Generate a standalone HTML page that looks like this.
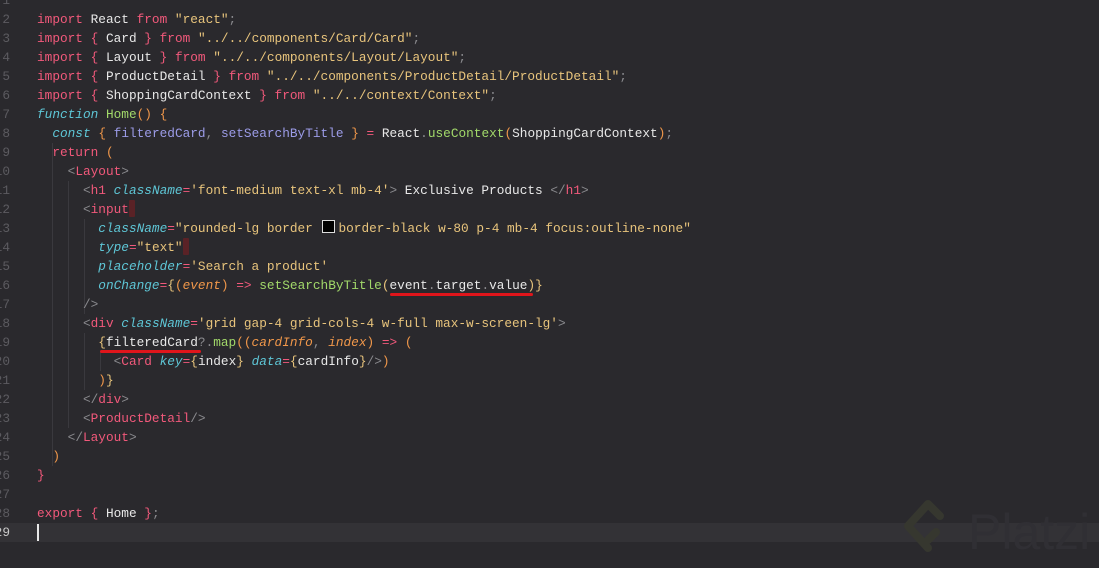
<!DOCTYPE html>
<html><head><meta charset="utf-8"><style>
html,body{margin:0;padding:0;}
body{width:1099px;height:568px;background:#2a292d;overflow:hidden;position:relative;font-family:"Liberation Mono",monospace;font-size:12.77px;}
.l{position:absolute;left:0;height:19px;line-height:19px;white-space:pre;color:#e8e8e8;width:1099px;}
.n{position:absolute;left:-20px;width:30px;text-align:right;color:#5c5b60;}
.c{position:absolute;left:37px;}
.k{color:#f2597b}.s{color:#e8c47c}.i{color:#5ec6d6;font-style:italic}.g{color:#a2d96a}.p{color:#a0a0f0}.o{color:#f0974a}.t{color:#8a8a8e}.r{color:#f2597b}.w{color:#e8e8e8}.pu{color:#9c9ce8}.ip{color:#f0974a;font-style:italic}
.guide{position:absolute;width:1px;background:#3a393e;}
.mark{display:inline-block;width:6px;height:17px;background:#5a2226;vertical-align:-4px;border-radius:1px;}
.sw{display:inline-block;width:11px;height:11px;background:#000;border:1px solid #ddd;margin:0 3px 0 2px;vertical-align:-1px;}
.ul{position:absolute;height:3px;background:#e0151b;border-radius:2px;}
</style></head><body>
<div style="position:absolute;left:0;top:523px;width:1099px;height:19px;background:#333236;"></div>
<div style="position:absolute;left:37px;top:524px;width:2px;height:17px;background:#e8e8e8;"></div>

<div class="guide" style="left:52px;top:143px;height:323px"></div>
<div class="guide" style="left:68px;top:181px;height:247px"></div>
<div class="guide" style="left:84px;top:219px;height:95px"></div>
<div class="guide" style="left:84px;top:333px;height:57px"></div>
<div class="guide" style="left:100px;top:352px;height:19px"></div>

<div class="l" style="top:-9px"><span class="n">1</span></div>
<div class="l" style="top:10px"><span class="n">2</span><span class="c"><span class="k">import</span> React <span class="k">from</span> <span class="s">"react"</span><span class="t">;</span></span></div>
<div class="l" style="top:29px"><span class="n">3</span><span class="c"><span class="k">import</span> <span class="k">{</span> Card <span class="k">}</span> <span class="k">from</span> <span class="s">"../../components/Card/Card"</span><span class="t">;</span></span></div>
<div class="l" style="top:48px"><span class="n">4</span><span class="c"><span class="k">import</span> <span class="k">{</span> Layout <span class="k">}</span> <span class="k">from</span> <span class="s">"../../components/Layout/Layout"</span><span class="t">;</span></span></div>
<div class="l" style="top:67px"><span class="n">5</span><span class="c"><span class="k">import</span> <span class="k">{</span> ProductDetail <span class="k">}</span> <span class="k">from</span> <span class="s">"../../components/ProductDetail/ProductDetail"</span><span class="t">;</span></span></div>
<div class="l" style="top:86px"><span class="n">6</span><span class="c"><span class="k">import</span> <span class="k">{</span> ShoppingCardContext <span class="k">}</span> <span class="k">from</span> <span class="s">"../../context/Context"</span><span class="t">;</span></span></div>
<div class="l" style="top:105px"><span class="n">7</span><span class="c"><span class="i">function</span> <span class="g">Home</span><span class="o">() {</span></span></div>
<div class="l" style="top:124px"><span class="n">8</span><span class="c">  <span class="i">const</span> <span class="o">{</span> <span class="pu">filteredCard</span><span class="t">,</span> <span class="pu">setSearchByTitle</span> <span class="o">}</span> <span class="k">=</span> React<span class="t">.</span><span class="g">useContext</span><span class="o">(</span>ShoppingCardContext<span class="o">)</span><span class="t">;</span></span></div>
<div class="l" style="top:143px"><span class="n">9</span><span class="c">  <span class="k">return</span> <span class="o">(</span></span></div>
<div class="l" style="top:162px"><span class="n">10</span><span class="c">    <span class="t">&lt;</span><span class="r">Layout</span><span class="t">&gt;</span></span></div>
<div class="l" style="top:181px"><span class="n">11</span><span class="c">      <span class="t">&lt;</span><span class="r">h1</span> <span class="i">className</span><span class="k">=</span><span class="s">'font-medium text-xl mb-4'</span><span class="t">&gt;</span> Exclusive Products <span class="t">&lt;/</span><span class="r">h1</span><span class="t">&gt;</span></span></div>
<div class="l" style="top:200px"><span class="n">12</span><span class="c">      <span class="t">&lt;</span><span class="r">input</span><span class="mark"></span></span></div>
<div class="l" style="top:219px"><span class="n">13</span><span class="c">        <span class="i">className</span><span class="k">=</span><span class="s">"rounded-lg border <span class="sw"></span>border-black w-80 p-4 mb-4 focus:outline-none"</span></span></div>
<div class="l" style="top:238px"><span class="n">14</span><span class="c">        <span class="i">type</span><span class="k">=</span><span class="s">"text"</span><span class="mark"></span></span></div>
<div class="l" style="top:257px"><span class="n">15</span><span class="c">        <span class="i">placeholder</span><span class="k">=</span><span class="s">'Search a product'</span></span></div>
<div class="l" style="top:276px"><span class="n">16</span><span class="c">        <span class="i">onChange</span><span class="k">=</span><span class="s">{</span><span class="o">(</span><span class="ip">event</span><span class="o">)</span> <span class="k">=&gt;</span> <span class="g">setSearchByTitle</span><span class="s">(</span>event<span class="t">.</span>target<span class="t">.</span>value<span class="s">)}</span></span></div>
<div class="l" style="top:295px"><span class="n">17</span><span class="c">      <span class="t">/&gt;</span></span></div>
<div class="l" style="top:314px"><span class="n">18</span><span class="c">      <span class="t">&lt;</span><span class="r">div</span> <span class="i">className</span><span class="k">=</span><span class="s">'grid gap-4 grid-cols-4 w-full max-w-screen-lg'</span><span class="t">&gt;</span></span></div>
<div class="l" style="top:333px"><span class="n">19</span><span class="c">        <span class="s">{</span>filteredCard<span class="t">?.</span><span class="g">map</span><span class="o">((</span><span class="ip">cardInfo</span><span class="t">,</span> <span class="ip">index</span><span class="o">)</span> <span class="k">=&gt;</span> <span class="o">(</span></span></div>
<div class="l" style="top:352px"><span class="n">20</span><span class="c">          <span class="t">&lt;</span><span class="r">Card</span> <span class="i">key</span><span class="k">=</span><span class="s">{</span>index<span class="s">}</span> <span class="i">data</span><span class="k">=</span><span class="s">{</span>cardInfo<span class="s">}</span><span class="t">/&gt;</span><span class="o">)</span></span></div>
<div class="l" style="top:371px"><span class="n">21</span><span class="c">        <span class="o">)</span><span class="s">}</span></span></div>
<div class="l" style="top:390px"><span class="n">22</span><span class="c">      <span class="t">&lt;/</span><span class="r">div</span><span class="t">&gt;</span></span></div>
<div class="l" style="top:409px"><span class="n">23</span><span class="c">      <span class="t">&lt;</span><span class="r">ProductDetail</span><span class="t">/&gt;</span></span></div>
<div class="l" style="top:428px"><span class="n">24</span><span class="c">    <span class="t">&lt;/</span><span class="r">Layout</span><span class="t">&gt;</span></span></div>
<div class="l" style="top:447px"><span class="n">25</span><span class="c">  <span class="o">)</span></span></div>
<div class="l" style="top:466px"><span class="n">26</span><span class="c"><span class="k">}</span></span></div>
<div class="l" style="top:485px"><span class="n">27</span></div>
<div class="l" style="top:504px"><span class="n">28</span><span class="c"><span class="k">export</span> <span class="k">{</span> Home <span class="k">}</span><span class="t">;</span></span></div>
<div class="l" style="top:523px"><span class="n" style="color:#c8c8c8">29</span></div>

<div class="ul" style="left:390px;top:293px;width:143px;"></div>
<div class="ul" style="left:100px;top:350px;width:101px;"></div>

<svg style="position:absolute;left:900px;top:496px" width="60" height="70" viewBox="0 0 60 70">
<path d="M28 8 L8 30 L28 52 M28 8 L40 20 M36 36 L28 44" fill="none" stroke="#36372f" stroke-width="8" stroke-linejoin="round" stroke-linecap="round"/>
</svg>
<div style="position:absolute;left:968px;top:502px;font-family:'Liberation Sans',sans-serif;font-size:50px;color:#302f34;line-height:60px;">Platzi</div>
</body></html>
